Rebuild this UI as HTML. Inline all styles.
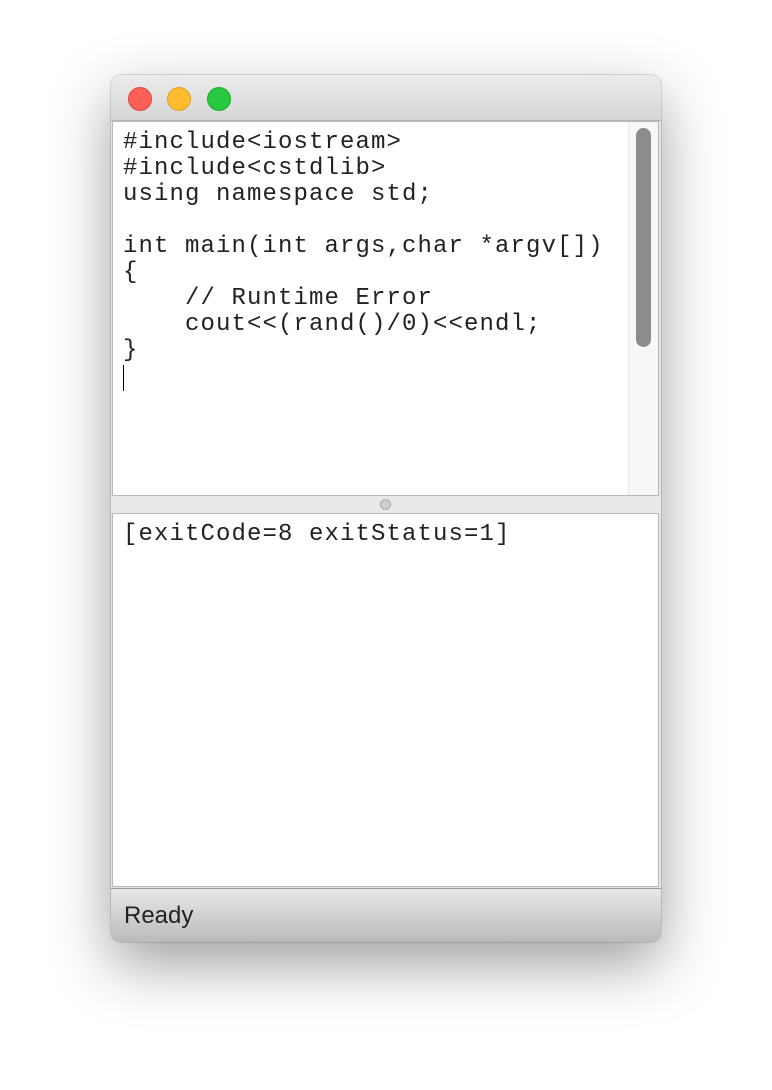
<!DOCTYPE html>
<html><head><style>
body{margin:0;width:772px;height:1090px;background:#fff;position:relative;overflow:hidden;font-family:"Liberation Sans",sans-serif}
.win{position:absolute;left:111px;top:75px;width:550px;height:867px;border-radius:10px;background:#e4e4e4;box-shadow:0 22px 60px rgba(0,0,0,.38),0 0 0 1px rgba(0,0,0,.12);overflow:hidden}
.title{position:absolute;left:0;top:0;width:550px;height:45px;background:linear-gradient(#ececec,#d6d6d6);border-bottom:1px solid #b5b5b5}
.dot{position:absolute;top:12px;width:24px;height:24px;border-radius:50%;box-sizing:border-box}
.ed{position:absolute;left:1px;top:46px;width:547px;height:375px;background:#fff;border:1px solid #b8b8b8;box-sizing:border-box}
.code{position:absolute;left:10px;top:8px;margin:0;font-family:"Liberation Mono",monospace;font-size:24px;letter-spacing:1.1px;line-height:26px;color:#222;white-space:pre}
.track{position:absolute;right:0;top:0;width:29px;height:373px;background:#f7f7f7;border-left:1px solid #e6e6e6}
.thumb{position:absolute;left:7px;top:6px;width:15px;height:219px;border-radius:8px;background:#8c8c8c}
.split{position:absolute;left:0;top:421px;width:550px;height:17px;background:#e9e9e9}
.knob{position:absolute;left:269px;top:3px;width:11px;height:11px;border-radius:50%;background:#cfcfcf;border:1px solid #aaa;box-sizing:border-box}
.out{position:absolute;left:1px;top:438px;width:547px;height:374px;background:#fff;border:1px solid #b8b8b8;box-sizing:border-box}
.status{position:absolute;left:0;top:813px;width:550px;height:54px;background:linear-gradient(#e8e8e8,#b9b9b9);border-top:1px solid #999}
.status span{position:absolute;left:13px;top:13px;font-size:24px;color:#222}
.caret{position:absolute;left:10px;top:243px;width:1px;height:26px;background:#000}
</style></head><body>
<div class="win">
<div class="title">
<div class="dot" style="left:17px;background:#fe5f57;border:1px solid #e0443e"></div>
<div class="dot" style="left:56px;background:#febc2e;border:1px solid #dea123"></div>
<div class="dot" style="left:96px;background:#28c840;border:1px solid #1aab29"></div>
</div>
<div class="ed">
<pre class="code">#include&lt;iostream&gt;
#include&lt;cstdlib&gt;
using namespace std;

int main(int args,char *argv[])
{
    // Runtime Error
    cout&lt;&lt;(rand()/0)&lt;&lt;endl;
}</pre>
<div class="caret"></div>
<div class="track"><div class="thumb"></div></div>
</div>
<div class="split"><div class="knob"></div></div>
<div class="out"><pre class="code" style="top:8px">[exitCode=8 exitStatus=1]</pre></div>
<div class="status"><span>Ready</span></div>
</div>
</body></html>
